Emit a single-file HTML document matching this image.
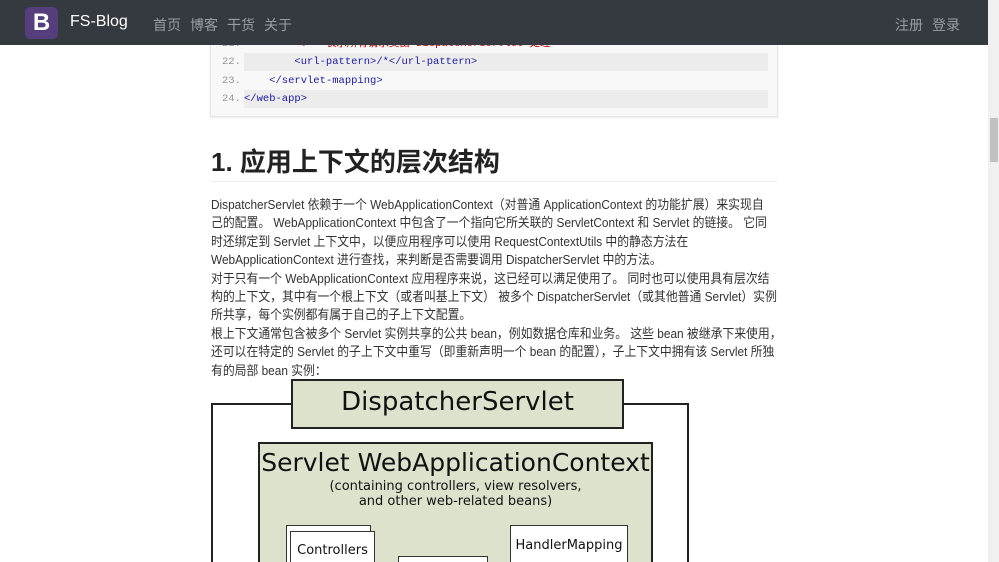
<!DOCTYPE html>
<html style="width:999px;height:562px;overflow:hidden"><head><meta charset="utf-8"><style>
*{margin:0;padding:0;box-sizing:border-box}
body{width:999px;height:562px;overflow:hidden;background:#fff;font-family:"Liberation Sans","Noto Sans CJK SC",sans-serif;position:relative}
.nav{position:absolute;left:0;top:0;width:988px;height:45px;background:#343a40;z-index:5}
.logo{position:absolute;left:25px;top:7px;width:33px;height:32px;background:#563d7c;border-radius:5px;color:#fff;font-weight:bold;font-size:24px;text-align:center;line-height:32px}
.brand{position:absolute;left:70px;top:13px;color:#fff;font-size:16px}
.nl{position:absolute;top:15px;color:#9a9da0;font-size:14px}
.sb{position:absolute;left:988px;top:0;width:11px;height:562px;background:#f0f0f0}
.thumb{position:absolute;left:990px;top:118px;width:8px;height:44px;background:#c1c1c1}
.code{position:absolute;left:210px;top:30px;width:568px;height:87px;background:#f8f8f8;border:1px solid #e5e5e5;box-shadow:0 1px 2px rgba(0,0,0,.08)}
.cl{position:absolute;left:0;width:566px;height:18px;font-family:"Liberation Mono",monospace;font-size:10.5px;line-height:18px;color:#1a1aa6}
.cl .n{position:absolute;left:11px;color:#999}
.cl .c{position:absolute;left:33px;right:9px;white-space:pre}
.bg .c{background:#ececec}
h1{position:absolute;left:211px;top:142px;font-size:26px;font-weight:bold;color:#222;white-space:nowrap}
.hr{position:absolute;left:211px;top:181px;width:566px;height:1px;background:#eee}
.p{position:absolute;left:211px;top:196px;font-size:13px;line-height:18.4px;color:#333;white-space:nowrap;transform:scaleX(0.91);transform-origin:0 0}
.d{position:absolute;font-family:"DejaVu Sans",sans-serif;color:#111;white-space:nowrap;text-align:center}
.clip{position:absolute;left:0;top:0;width:999px;height:562px;overflow:hidden}
</style></head><body><div class="clip">
<div class="nav">
<div class="logo">B</div><div class="brand">FS-Blog</div>
<div class="nl" style="left:153px">首页</div><div class="nl" style="left:190px">博客</div><div class="nl" style="left:227px">干货</div><div class="nl" style="left:264px">关于</div>
<div class="nl" style="left:895px">注册</div><div class="nl" style="left:932px">登录</div>
</div>
<div class="sb"></div><div class="thumb"></div>
<div class="code">
<div class="cl" style="top:4px"><span class="n">21.</span><span class="c" style="color:#c00">        &lt;!-- 表示所有请求交由 DispatcherServlet 处理 --&gt;</span></div>
<div class="cl bg" style="top:22px"><span class="n">22.</span><span class="c">        &lt;url-pattern&gt;/*&lt;/url-pattern&gt;</span></div>
<div class="cl" style="top:41px"><span class="n">23.</span><span class="c">    &lt;/servlet-mapping&gt;</span></div>
<div class="cl bg" style="top:59px"><span class="n">24.</span><span class="c">&lt;/web-app&gt;</span></div>
</div>
<h1>1. 应用上下文的层次结构</h1>
<div class="hr"></div>
<div class="p">
DispatcherServlet 依赖于一个 WebApplicationContext（对普通 ApplicationContext 的功能扩展）来实现自<br>
己的配置。 WebApplicationContext 中包含了一个指向它所关联的 ServletContext 和 Servlet 的链接。 它同<br>
时还绑定到 Servlet 上下文中，以便应用程序可以使用 RequestContextUtils 中的静态方法在<br>
WebApplicationContext 进行查找，来判断是否需要调用 DispatcherServlet 中的方法。<br>
对于只有一个 WebApplicationContext 应用程序来说，这已经可以满足使用了。 同时也可以使用具有层次结<br>
构的上下文，其中有一个根上下文（或者叫基上下文） 被多个 DispatcherServlet（或其他普通 Servlet）实例<br>
所共享，每个实例都有属于自己的子上下文配置。<br>
根上下文通常包含被多个 Servlet 实例共享的公共 bean，例如数据仓库和业务。 这些 bean 被继承下来使用，<br>
还可以在特定的 Servlet 的子上下文中重写（即重新声明一个 bean 的配置），子上下文中拥有该 Servlet 所独<br>
有的局部 bean 实例：
</div>
<div style="position:absolute;left:211px;top:403px;width:478px;height:170px;border:2px solid #222"></div>
<div style="position:absolute;left:291px;top:379px;width:333px;height:50px;border:2px solid #222;background:#dde2cc"></div>
<div class="d" style="left:291px;top:387px;width:333px;font-size:26px">DispatcherServlet</div>
<div style="position:absolute;left:258px;top:442px;width:395px;height:140px;border:2px solid #222;background:#dde2cc"></div>
<div class="d" style="left:258px;top:448px;width:395px;font-size:25px">Servlet WebApplicationContext</div>
<div class="d" style="left:258px;top:479px;width:395px;font-size:13px;line-height:15px">(containing controllers, view resolvers,<br>and other web-related beans)</div>
<div style="position:absolute;left:286px;top:525px;width:85px;height:50px;border:1px solid #333;background:#fff"></div>
<div style="position:absolute;left:290px;top:531px;width:85px;height:50px;border:1px solid #333;background:#fff"></div>
<div class="d" style="left:290px;top:543px;width:85px;font-size:13px">Controllers</div>
<div style="position:absolute;left:398px;top:556px;width:90px;height:20px;border:1px solid #333;background:#fff"></div>
<div style="position:absolute;left:510px;top:525px;width:118px;height:50px;border:1px solid #333;background:#fff"></div>
<div class="d" style="left:510px;top:538px;width:118px;font-size:13px">HandlerMapping</div>
</div></body></html>
